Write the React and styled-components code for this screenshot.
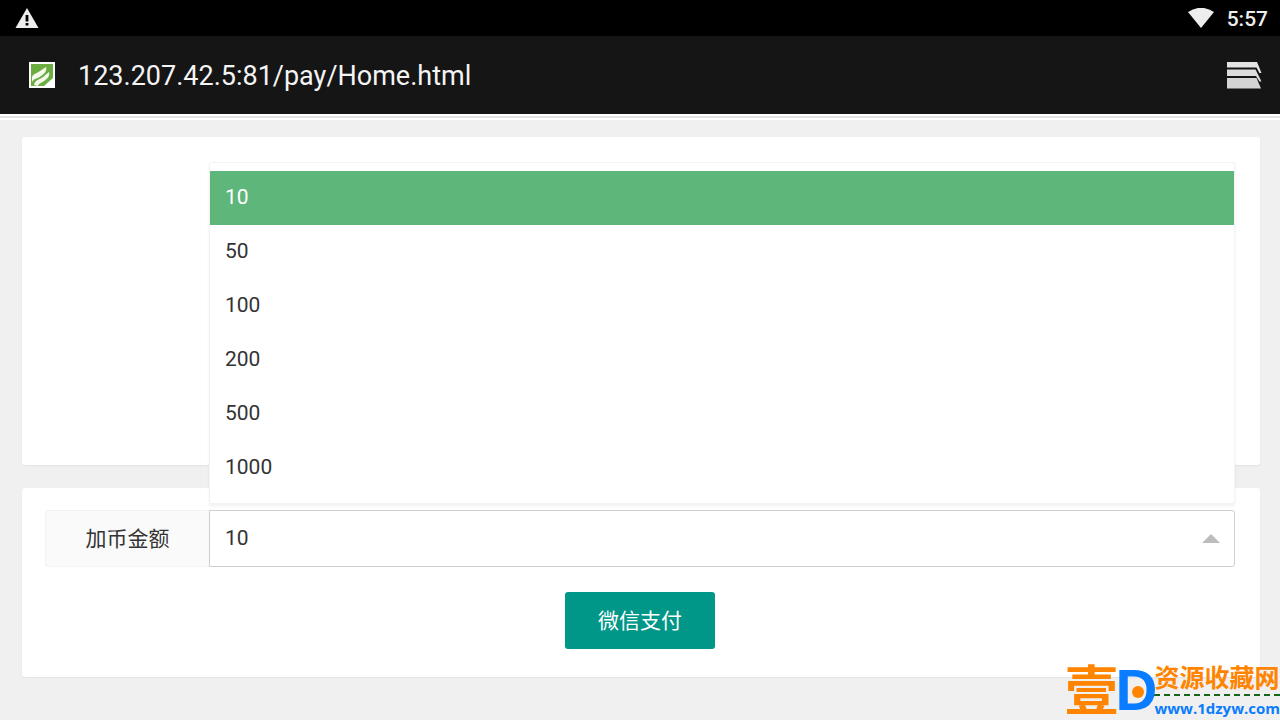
import React, { useState } from "react";
import styled, { createGlobalStyle } from "styled-components";

const amounts = ["10", "50", "100", "200", "500", "1000"];

const GlobalStyle = createGlobalStyle`
  * {
    box-sizing: border-box;
  }

  body {
    margin: 0;
    background-color: #f0f0f0;
    color: #333333;
    font-family: Roboto, "Noto Sans CJK SC", sans-serif;
    font-size: 21px;
  }

  button,
  select {
    font: inherit;
  }
`;

const Page = styled.div`
  position: relative;
  min-height: 100vh;
`;

const StatusBar = styled.div`
  height: 36px;
  padding: 0 12px 0 15px;
  display: flex;
  align-items: center;
  justify-content: space-between;
  background-color: #000000;
  color: #ededed;
  font-weight: 500;
`;

const StatusGroup = styled.div`
  display: flex;
  align-items: center;
  gap: 12px;
  padding-top: 2px;
`;

const AddressBar = styled.header`
  height: 78px;
  padding: 0 18px 0 28px;
  display: flex;
  align-items: center;
  background-color: #151515;
`;

const Address = styled.div`
  flex: 1;
  margin-left: 22px;
  padding-top: 2px;
  color: #f4f4f4;
  font-size: 27px;
`;

const TabsButton = styled.button`
  display: flex;
  padding: 0;
  border: none;
  background: none;
`;

const Progress = styled.div`
  height: 6px;
  border-top: 2px solid #ffffff;
  border-bottom: 2px solid #ffffff;
  background-color: #e2e2e2;
`;

const Main = styled.main`
  padding: 17px 20px 23px 22px;
  display: grid;
  gap: 23px;
`;

const Card = styled.section`
  min-height: ${(props) => (props.$tall ? "328px" : "auto")};
  padding: 22px 25px 28px 23px;
  border-radius: 3px;
  background-color: #ffffff;
  box-shadow: 0 1px 2px rgba(0, 0, 0, 0.06);
`;

const Field = styled.div`
  display: flex;
  height: 57px;
`;

const Label = styled.label`
  width: 164px;
  display: flex;
  align-items: center;
  justify-content: center;
  padding-bottom: 4px;
  border: 1px solid #f3f3f3;
  border-right: none;
  border-radius: 3px 0 0 3px;
  background-color: #fafafa;
`;

const SelectBox = styled.div`
  position: relative;
  flex: 1;
`;

const Select = styled.select`
  display: block;
  width: 100%;
  height: 100%;
  padding: 0 15px 2px;
  appearance: none;
  border: 1px solid #cfcfcf;
  border-radius: 0 3px 3px 0;
  outline: none;
  background-color: #ffffff;
  color: #333333;
`;

const Arrow = styled.span`
  position: absolute;
  top: 24px;
  right: 15px;
  border: 9px solid transparent;
  border-top: none;
  border-bottom-color: #bdbdbd;
  pointer-events: none;
  transform: ${(props) => (props.$open ? "none" : "rotate(180deg)")};
`;

const Menu = styled.div`
  position: absolute;
  z-index: 1;
  left: 0;
  right: 0;
  bottom: calc(100% + 6px);
  padding: 8px 0;
  border: 1px solid #f3f3f3;
  border-radius: 2px;
  background-color: #ffffff;
  box-shadow: 0 2px 3px rgba(0, 0, 0, 0.06);
`;

const Option = styled.button`
  display: block;
  width: 100%;
  height: 54px;
  padding: 0 15px 2px;
  border: none;
  background-color: ${(props) => (props.$active ? "#5fb67a" : "#ffffff")};
  color: ${(props) => (props.$active ? "#ffffff" : "#333333")};
  text-align: left;
`;

const Actions = styled.div`
  margin-top: 25px;
  display: flex;
  justify-content: center;
`;

const PayButton = styled.button`
  height: 57px;
  padding: 0 33px 4px;
  border: none;
  border-radius: 3px;
  background-color: #009688;
  color: #ffffff;
`;

const SiteMark = styled.div`
  position: absolute;
  right: 0;
  bottom: 0;
  height: 60px;
  display: flex;
  align-items: center;
  white-space: nowrap;
  color: #ff8400;
  font-family: "Open Sans", "Noto Sans CJK SC", sans-serif;
  font-weight: 700;
`;

const MarkSign = styled.span`
  font-size: 54px;
  line-height: 60px;
`;

const MarkLetter = styled.span`
  position: relative;
  margin: 0 -3px;
  color: #0a7cff;
  font-family: "Liberation Sans", sans-serif;
  font-size: 58px;
  line-height: 60px;

  &::after {
    content: "";
    position: absolute;
    top: 26px;
    left: 16px;
    width: 12px;
    height: 12px;
    border-radius: 50%;
    background-color: #ff8400;
  }
`;

const MarkText = styled.div`
  display: flex;
  flex-direction: column;
`;

const MarkName = styled.span`
  height: 35px;
  border-bottom: 2px dashed #17641c;
  font-size: 25px;
  line-height: 32px;
`;

const MarkUrl = styled.span`
  color: #0a7cff;
  font-size: 15px;
  line-height: 24px;
`;

const WarningIcon = () => (
  <svg width="24" height="22" viewBox="0 0 24 22" aria-hidden="true">
    <path d="M12 1 L23.5 21 H0.5 Z" fill="#ededed" />
    <path d="M10.6 8h2.8v6.5h-2.8zM10.6 16h2.8v2.5h-2.8z" fill="#000000" />
  </svg>
);

const WifiIcon = () => (
  <svg width="28" height="22" viewBox="0 0 28 22" aria-hidden="true">
    <path d="M1 4 Q14 -4.5 27 4 L14 20 Z" fill="#ededed" />
  </svg>
);

const SiteIcon = () => (
  <svg width="28" height="28" viewBox="0 0 28 28" aria-hidden="true">
    <path d="M1 1h26v26H1z" fill="#ffffff" />
    <path d="M3 3h22v22H3z" fill="#6cad40" />
    <path
      d="M4 17 C4 13 8 13 12 10 L18 6 C19 10 17 12 13 15 C9 18 6 17 4 21z"
      fill="#f4f8ed"
    />
    <path
      d="M6 24 C7 19 11 19 15 16 L21 11 C22 15 20 17 16 20 C13 22 11 22 10 25z"
      fill="#f4f8ed"
    />
    <path d="M25 17v8h-9z" fill="#ffffff" />
  </svg>
);

const TabsIcon = () => (
  <svg width="36" height="28" viewBox="0 0 36 28" aria-hidden="true">
    <path d="M1 1H31L35.5 12H33.5L30.5 6.5H1z" fill="#e4e4e4" />
    <path d="M1 8.5H29.5L35.5 20.5H33.5L30 15H1z" fill="#dcdcdc" />
    <path d="M1 17H30.5L35 27.5H1z" fill="#d4d4d4" />
  </svg>
);

export default function App() {
  const [amount, setAmount] = useState("10");
  const [open, setOpen] = useState(true);

  const toggleMenu = (event) => {
    event.preventDefault();
    setOpen(!open);
  };

  const pickAmount = (value) => {
    setAmount(value);
    setOpen(false);
  };

  return (
    <Page>
      <GlobalStyle />
      <StatusBar>
        <WarningIcon />
        <StatusGroup>
          <WifiIcon />
          <span>5:57</span>
        </StatusGroup>
      </StatusBar>
      <AddressBar>
        <SiteIcon />
        <Address>123.207.42.5:81/pay/Home.html</Address>
        <TabsButton type="button" aria-label="Tabs">
          <TabsIcon />
        </TabsButton>
      </AddressBar>
      <Progress />
      <Main>
        <Card $tall />
        <Card>
          <Field>
            <Label htmlFor="amount">加币金额</Label>
            <SelectBox>
              <Select
                id="amount"
                value={amount}
                onMouseDown={toggleMenu}
                onChange={(event) => setAmount(event.target.value)}
              >
                {amounts.map((value) => (
                  <option key={value}>{value}</option>
                ))}
              </Select>
              <Arrow $open={open} />
              {open ? (
                <Menu role="listbox">
                  {amounts.map((value) => (
                    <Option
                      key={value}
                      type="button"
                      role="option"
                      aria-selected={value === amount}
                      $active={value === amount}
                      onClick={() => pickAmount(value)}
                    >
                      {value}
                    </Option>
                  ))}
                </Menu>
              ) : undefined}
            </SelectBox>
          </Field>
          <Actions>
            <PayButton type="button">微信支付</PayButton>
          </Actions>
        </Card>
      </Main>
      <SiteMark>
        <MarkSign>壹</MarkSign>
        <MarkLetter>D</MarkLetter>
        <MarkText>
          <MarkName>资源收藏网</MarkName>
          <MarkUrl>www.1dzyw.com</MarkUrl>
        </MarkText>
      </SiteMark>
    </Page>
  );
}
